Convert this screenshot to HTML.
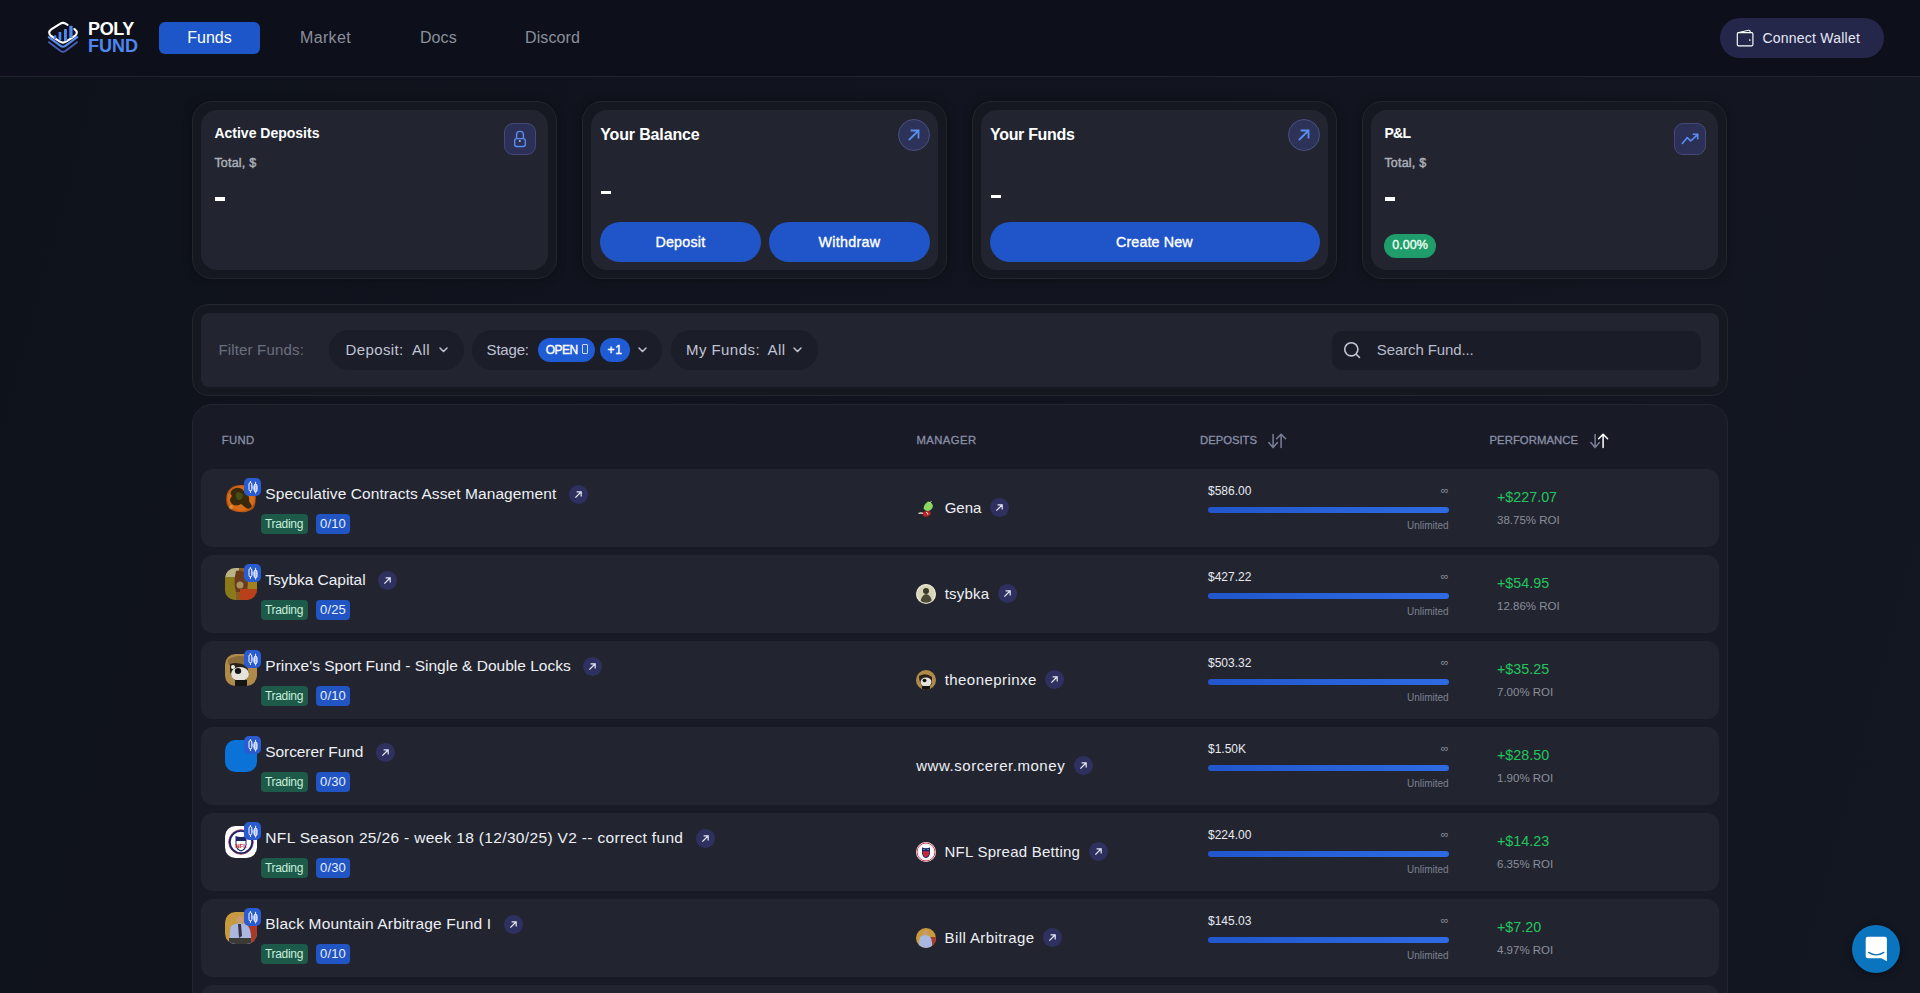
<!DOCTYPE html>
<html><head><meta charset="utf-8"><style>

*{box-sizing:border-box;margin:0;padding:0}
html,body{width:1920px;height:993px;overflow:hidden}
body{background:linear-gradient(105deg,#0e121b 0%,#11141e 35%,#12151f 65%,#131722 100%);font-family:"Liberation Sans",sans-serif;color:#fff;position:relative}
.t{position:absolute;line-height:1;white-space:pre}
.a{position:absolute}
svg{position:absolute;overflow:visible}
#hdr{position:absolute;left:0;top:0;width:1920px;height:77px;background:#0d101a;border-bottom:1px solid #22252f}
.navact{position:absolute;left:159px;top:22px;width:101px;height:32px;background:#1d56c9;border-radius:6px}
#cw{position:absolute;left:1720px;top:18px;width:164px;height:40px;border-radius:20px;background:#24264a}
.card{position:absolute;top:101px;width:365px;height:178px;border-radius:20px;background:#161821;border:1px solid #23262f;box-shadow:0 0 10px rgba(0,0,0,0.35)}
.card .in{position:absolute;left:8px;top:8px;right:8px;bottom:8px;border-radius:16px;background:#22252f}
.ibox{position:absolute;width:32px;height:32px;border-radius:9px;background:#2c3057;border:1px solid #444879}
.icirc{position:absolute;width:32px;height:32px;border-radius:50%;background:#2d3258;border:1px solid #4a4f80}
.btn{position:absolute;top:222px;height:40px;border-radius:20px;background:#1f55c8}
.dash{position:absolute;height:3px;background:#fff}
#filt{position:absolute;left:192px;top:304px;width:1536px;height:92px;border-radius:16px;background:#161821;border:1px solid #23262f}
#filt .in{position:absolute;left:8px;top:8px;right:8px;bottom:8px;border-radius:8px;background:#22252f}
.pill{position:absolute;top:330px;height:40px;border-radius:20px;background:#1b1d29}
.chip{position:absolute;top:338px;height:24px;border-radius:12px;background:#1f5bd2}
#search{position:absolute;left:1332px;top:331px;width:369px;height:39px;border-radius:10px;background:#1a1c27}
#tbl{position:absolute;left:192px;top:404px;width:1536px;height:700px;border-radius:20px;background:#181a25;border:1px solid #23262f}
.row{position:absolute;left:201px;width:1518px;height:78px;border-radius:12px;background:#22252f}
.av{position:absolute;width:32px;height:32px;border-radius:50%;overflow:hidden}
.bdg{position:absolute;width:17px;height:18px;border-radius:5px;background:#2a5bd0}
.trd{position:absolute;width:47px;height:20px;border-radius:4px;background:#1e5a4a}
.cnt{position:absolute;width:34px;height:20px;border-radius:4px;background:#2155c4}
.mav{position:absolute;width:20px;height:20px;border-radius:50%;overflow:hidden}
.rc{position:absolute;width:19px;height:19px;border-radius:50%;background:#2e3160}
.bar{position:absolute;left:1208px;width:241px;height:5px;border-radius:3px;background:linear-gradient(90deg,#2156cc,#2e6be3)}
#chat{position:absolute;left:1852px;top:925px;width:48px;height:48px;border-radius:50%;background:#0a74bf;box-shadow:0 1px 6px rgba(0,0,0,0.5)}

</style></head><body>
<div id="hdr"></div>
<svg style="left:0;top:0" width="150" height="76" viewBox="0 0 150 76">
<path d="M49 42.2 L60.6 51 Q63 52.7 65.4 51 L77 42.2" fill="none" stroke="#5670d8" stroke-width="2" stroke-linecap="round" opacity="0.8"/>
<path d="M48.8 37.2 L60.6 45.9 Q63 47.6 65.4 45.9 L77.2 37.2" fill="none" stroke="#5b8cf0" stroke-width="2.1" stroke-linecap="round"/>
<path d="M67.6 24.8 L66 23.8 Q63 21.9 60 23.8 L51.2 29.4 Q47.2 32.7 51.2 36 L60 41.7 Q63 43.6 66 41.7 L74.8 36 Q78.8 32.7 74.8 29.4 L74.3 29" fill="none" stroke="#fff" stroke-width="2.1" stroke-linecap="round" stroke-linejoin="round"/>
<rect x="53.8" y="35.3" width="2.5" height="3.6" rx="1" fill="#4f86f0"/>
<rect x="58.6" y="31.9" width="2.7" height="8.4" rx="0.6" fill="#4f86f0"/>
<rect x="64" y="29" width="2.9" height="12" rx="0.6" fill="#4f86f0"/>
<rect x="69.3" y="25.8" width="3.3" height="12" rx="0.6" fill="#4f86f0"/>
</svg>
<div class="t" style="left:88.00px;top:19.70px;font-size:18px;color:#fff;font-weight:bold;letter-spacing:-0.340px;">POLY</div>
<div class="t" style="left:88.00px;top:37.10px;font-size:18px;color:#4f86f0;font-weight:bold;">FUND</div>
<div class="navact"></div>
<div class="t" style="left:187.30px;top:29.70px;font-size:16px;color:#fff;letter-spacing:-0.014px;">Funds</div>
<div class="t" style="left:300.00px;top:29.70px;font-size:16px;color:#8b8f9c;letter-spacing:0.349px;">Market</div>
<div class="t" style="left:420.00px;top:29.70px;font-size:16px;color:#8b8f9c;letter-spacing:0.062px;">Docs</div>
<div class="t" style="left:525.00px;top:29.70px;font-size:16px;color:#8b8f9c;letter-spacing:0.109px;">Discord</div>
<div id="cw"></div>
<svg style="left:1736px;top:29px" width="19" height="19" viewBox="0 0 19 19">
<rect x="1.3" y="3.6" width="15.6" height="13.2" rx="1.3" fill="none" stroke="#fff" stroke-width="1.15"/>
<path d="M1.6 3.8 L12.6 1.3 Q13.9 1.1 14.1 2.3 L14.3 3.6" fill="none" stroke="#fff" stroke-width="1.15"/>
<circle cx="13.8" cy="11" r="0.85" fill="#fff"/>
</svg>
<div class="t" style="left:1762.50px;top:31.10px;font-size:14px;color:#e6e8f5;letter-spacing:0.220px;">Connect Wallet</div>
<div class="card" style="left:192px"><div class="in"></div></div>
<div class="card" style="left:582px"><div class="in"></div></div>
<div class="card" style="left:972px"><div class="in"></div></div>
<div class="card" style="left:1362px"><div class="in"></div></div>
<div class="t" style="left:214.40px;top:126.40px;font-size:14px;color:#fff;font-weight:bold;">Active Deposits</div>
<div class="t" style="left:214.40px;top:156.88px;font-size:12.5px;color:#acb0bb;letter-spacing:0.211px;-webkit-text-stroke:0.45px currentColor;">Total, $</div>
<div class="dash" style="left:215px;top:197px;width:10px;height:4px"></div>
<div class="ibox" style="left:504px;top:123px"></div>
<svg style="left:504px;top:123px" width="32" height="32" viewBox="0 0 32 32">
<rect x="10.7" y="15.6" width="10.6" height="7.9" rx="2" fill="none" stroke="#5b8def" stroke-width="1.4"/>
<path d="M12.6 15.6 V11.8 Q12.6 8.4 16 8.4 Q19.4 8.4 19.4 11.8 V15.6" fill="none" stroke="#5b8def" stroke-width="1.4"/>
<circle cx="15.8" cy="18" r="1" fill="#9fc0ff"/>
</svg>
<div class="t" style="left:600.20px;top:127.40px;font-size:16px;color:#fff;font-weight:bold;letter-spacing:-0.140px;">Your Balance</div>
<div class="icirc" style="left:898px;top:119px"></div>
<svg style="left:898px;top:119px" width="32" height="32" viewBox="0 0 32 32"><path d="M11.5 20.5 L20.5 11.5 M13.5 11.5 H20.5 V18.5" fill="none" stroke="#5b8def" stroke-width="1.8" stroke-linecap="square"/></svg>
<div class="dash" style="left:601px;top:191px;width:10px"></div>
<div class="btn" style="left:600px;width:161px"></div>
<div class="btn" style="left:769px;width:161px"></div>
<div class="t" style="left:655.40px;top:235.15px;font-size:14.3px;color:#fff;letter-spacing:0.217px;-webkit-text-stroke:0.35px currentColor;">Deposit</div>
<div class="t" style="left:818.50px;top:235.15px;font-size:14.3px;color:#fff;letter-spacing:0.301px;-webkit-text-stroke:0.35px currentColor;">Withdraw</div>
<div class="t" style="left:990.00px;top:127.40px;font-size:16px;color:#fff;font-weight:bold;letter-spacing:-0.310px;">Your Funds</div>
<div class="icirc" style="left:1288px;top:119px"></div>
<svg style="left:1288px;top:119px" width="32" height="32" viewBox="0 0 32 32"><path d="M11.5 20.5 L20.5 11.5 M13.5 11.5 H20.5 V18.5" fill="none" stroke="#5b8def" stroke-width="1.8" stroke-linecap="square"/></svg>
<div class="dash" style="left:991px;top:195px;width:10px"></div>
<div class="btn" style="left:990px;width:330px"></div>
<div class="t" style="left:1116.00px;top:235.15px;font-size:14.3px;color:#fff;letter-spacing:0.120px;-webkit-text-stroke:0.35px currentColor;">Create New</div>
<div class="t" style="left:1384.40px;top:126.40px;font-size:14px;color:#fff;font-weight:bold;letter-spacing:-0.667px;">P&amp;L</div>
<div class="t" style="left:1384.40px;top:156.88px;font-size:12.5px;color:#acb0bb;letter-spacing:0.211px;-webkit-text-stroke:0.45px currentColor;">Total, $</div>
<div class="dash" style="left:1385px;top:197px;width:10px;height:4px"></div>
<div class="ibox" style="left:1674px;top:123px"></div>
<svg style="left:1674px;top:123px" width="32" height="32" viewBox="0 0 32 32">
<path d="M8.3 20.4 L13.3 14.6 L16.7 18 L23.7 11.3 M19.3 11.3 H23.7 V15.8" fill="none" stroke="#5b8def" stroke-width="1.6" stroke-linecap="round" stroke-linejoin="round"/>
</svg>
<div class="a" style="left:1384px;top:234px;width:52px;height:24px;border-radius:12px;background:#1f9d6a"></div>
<div class="t" style="left:1392.30px;top:239.38px;font-size:12.5px;color:#f0fff6;letter-spacing:0.049px;-webkit-text-stroke:0.35px currentColor;">0.00%</div>
<div id="filt"><div class="in"></div></div>
<div class="t" style="left:218.40px;top:342.05px;font-size:15px;color:#6b7080;letter-spacing:0.172px;">Filter Funds:</div>
<div class="pill" style="left:329px;width:135px"></div>
<div class="t" style="left:345.60px;top:342.05px;font-size:15px;color:#c0c4d4;letter-spacing:0.371px;">Deposit:</div>
<div class="t" style="left:412.00px;top:342.05px;font-size:15px;color:#c0c4d4;letter-spacing:0.443px;">All</div>
<svg style="left:438.5px;top:347px" width="10" height="7" viewBox="0 0 10 7"><path d="M1 1 L4.5 4.5 L8 1" fill="none" stroke="#c0c4d4" stroke-width="1.5" stroke-linecap="round" stroke-linejoin="round"/></svg>
<div class="pill" style="left:471.5px;width:190px"></div>
<div class="t" style="left:486.60px;top:342.05px;font-size:15px;color:#c0c4d4;letter-spacing:-0.196px;">Stage:</div>
<div class="chip" style="left:538px;width:57px"></div>
<div class="chip" style="left:600px;width:30px"></div>
<div class="t" style="left:545.70px;top:344.00px;font-size:12px;color:#fff;letter-spacing:-0.504px;-webkit-text-stroke:0.35px currentColor;">OPEN</div>
<div class="a" style="left:582px;top:344px;width:6px;height:10px;border:1px solid #cfd8ff;border-radius:1px"></div>
<div class="t" style="left:607.50px;top:344.00px;font-size:12px;color:#fff;letter-spacing:0.656px;-webkit-text-stroke:0.35px currentColor;">+1</div>
<svg style="left:637.5px;top:347px" width="10" height="7" viewBox="0 0 10 7"><path d="M1 1 L4.5 4.5 L8 1" fill="none" stroke="#c0c4d4" stroke-width="1.5" stroke-linecap="round" stroke-linejoin="round"/></svg>
<div class="pill" style="left:670.5px;width:147px"></div>
<div class="t" style="left:686.00px;top:342.05px;font-size:15px;color:#c0c4d4;letter-spacing:0.441px;">My Funds:</div>
<div class="t" style="left:767.50px;top:342.05px;font-size:15px;color:#c0c4d4;letter-spacing:0.443px;">All</div>
<svg style="left:793px;top:347px" width="10" height="7" viewBox="0 0 10 7"><path d="M1 1 L4.5 4.5 L8 1" fill="none" stroke="#c0c4d4" stroke-width="1.5" stroke-linecap="round" stroke-linejoin="round"/></svg>
<div id="search"></div>
<svg style="left:1342px;top:340px" width="20" height="20" viewBox="0 0 20 20">
<circle cx="9.3" cy="9.3" r="6.6" fill="none" stroke="#c0c4d4" stroke-width="1.6"/>
<path d="M14.2 14.2 L17.5 17.5" stroke="#c0c4d4" stroke-width="1.6" stroke-linecap="round"/>
</svg>
<div class="t" style="left:1376.80px;top:342.25px;font-size:15px;color:#b8bccb;letter-spacing:-0.114px;">Search Fund...</div>
<div id="tbl"></div>
<div class="t" style="left:221.70px;top:435.39px;font-size:11.3px;color:#8a8fa8;letter-spacing:0.402px;-webkit-text-stroke:0.3px currentColor;">FUND</div>
<div class="t" style="left:916.50px;top:435.39px;font-size:11.3px;color:#8a8fa8;letter-spacing:0.411px;-webkit-text-stroke:0.3px currentColor;">MANAGER</div>
<div class="t" style="left:1200.00px;top:435.39px;font-size:11.3px;color:#8a8fa8;letter-spacing:-0.016px;-webkit-text-stroke:0.3px currentColor;">DEPOSITS</div>
<div class="t" style="left:1489.50px;top:435.39px;font-size:11.3px;color:#8a8fa8;letter-spacing:0.057px;-webkit-text-stroke:0.3px currentColor;">PERFORMANCE</div>
<svg style="left:1268px;top:433px" width="19" height="16" viewBox="0 0 19 16"><path d="M5.1 1.5 V14.6 M0.8 9.6 L5.1 14.6 L9.4 9.6" fill="none" stroke="#7a7f98" stroke-width="1.5" stroke-linecap="round" stroke-linejoin="round"/>
<path d="M13.1 14.6 V1.2 M8.6 5.8 L13.1 1.2 L17.6 5.8" fill="none" stroke="#7a7f98" stroke-width="1.5" stroke-linecap="round" stroke-linejoin="round"/></svg>
<svg style="left:1590px;top:433px" width="19" height="16" viewBox="0 0 19 16"><path d="M5.1 1.5 V14.6 M0.8 9.6 L5.1 14.6 L9.4 9.6" fill="none" stroke="#7a7f98" stroke-width="1.5" stroke-linecap="round" stroke-linejoin="round"/>
<path d="M13.1 14.6 V1.2 M8.6 5.8 L13.1 1.2 L17.6 5.8" fill="none" stroke="#ffffff" stroke-width="1.5" stroke-linecap="round" stroke-linejoin="round"/></svg>
<div class="row" style="top:469px"></div>
<svg style="left:225px;top:482px" width="32" height="32" viewBox="0 0 32 32"><clipPath id="ca0"><rect width="32" height="32" rx="10.5"/></clipPath><g clip-path="url(#ca0)"><defs><radialGradient id="gsp0" cx="50%" cy="50%" r="62%"><stop offset="0" stop-color="#e07820"/><stop offset="0.7" stop-color="#d86a18"/><stop offset="1" stop-color="#6a2a08"/></radialGradient></defs>
<path d="M3 9 Q8 2 17 3 Q27 2 30 9 Q32 18 29 26 Q24 31 15 30 Q5 30 2 23 Q0 15 3 9Z" fill="url(#gsp0)"/>
<path d="M7 8 Q12 4 17 7 L21 11 Q25 14 24 19 L27 24 Q25 28 21 26 L16 22 Q11 25 7 22 Q3 18 7 14 Q4 11 7 8Z" fill="#3a2a0c"/>
<path d="M11 11 Q15 9 18 13 Q18 18 13 18 Q10 15 11 11Z" fill="#4a5218" opacity="0.9"/>
<circle cx="26" cy="8" r="2" fill="#f0a040" opacity="0.8"/><circle cx="6" cy="25" r="2" fill="#f0a040" opacity="0.7"/></g></svg>
<div class="bdg" style="left:244px;top:478px"></div>
<svg style="left:244px;top:478px" width="17" height="18" viewBox="0 0 17 18"><path d="M8 8 L11 12" stroke="#9fb8ff" stroke-width="2.2" opacity="0.7"/><path d="M6.4 3 V15 M11.6 3.8 V15.5" stroke="#fff" stroke-width="0.9"/><rect x="5" y="4.6" width="2.8" height="8.2" rx="1.4" fill="#2a5bd0" stroke="#fff" stroke-width="1"/><rect x="10.2" y="6.2" width="2.8" height="7.5" rx="1.4" fill="#9fb8ff" stroke="#fff" stroke-width="1"/></svg>
<div class="t" style="left:265.30px;top:485.82px;font-size:15.5px;color:#eef0f6;letter-spacing:0.085px;">Speculative Contracts Asset Management</div>
<div class="rc" style="left:568.8px;top:485px"></div>
<svg style="left:568.8px;top:485px" width="19" height="19" viewBox="0 0 19 19"><path d="M6.8 12.2 L12 7 M8.2 6.8 H12.2 V10.8" fill="none" stroke="#e6e8f5" stroke-width="1.2" stroke-linecap="square"/></svg>
<div class="trd" style="left:261px;top:514px"></div>
<div class="t" style="left:265.00px;top:518.30px;font-size:12px;color:#c8efd9;letter-spacing:-0.321px;">Trading</div>
<div class="cnt" style="left:316px;top:514px"></div>
<div class="t" style="left:320.00px;top:517.45px;font-size:13px;color:#e8eeff;letter-spacing:0.172px;">0/10</div>
<svg style="left:916.3px;top:498px" width="20" height="20" viewBox="0 0 20 20"><clipPath id="cm0"><circle cx="10" cy="10" r="10"/></clipPath><g clip-path="url(#cm0)"><path d="M7.5 10.5 Q8 6 12 3.5 Q16 4 17 8 Q16.5 12 12 13 Q9 13 7.5 10.5Z" fill="#8ad860"/>
<path d="M13 5 L15.5 3.5" stroke="#c8f0a0" stroke-width="1"/>
<path d="M6 15 Q9 12.5 13 13 Q15.5 14 14.5 16.5 Q11.5 19.5 8 18.5Z" fill="#b82424"/>
<path d="M2.5 15.5 Q5 14.5 7 15.5" stroke="#e8e0d0" stroke-width="1.3" fill="none"/>
<path d="M10.5 14 L12 16.5" stroke="#f0e0d0" stroke-width="1.1"/></g></svg>
<div class="t" style="left:944.70px;top:500.25px;font-size:15px;color:#eef0f6;letter-spacing:-0.026px;">Gena</div>
<div class="rc" style="left:989.8px;top:498px"></div>
<svg style="left:989.8px;top:498px" width="19" height="19" viewBox="0 0 19 19"><path d="M6.8 12.2 L12 7 M8.2 6.8 H12.2 V10.8" fill="none" stroke="#e6e8f5" stroke-width="1.2" stroke-linecap="square"/></svg>
<div class="t" style="left:1208.00px;top:484.80px;font-size:12px;color:#e8eaf2;">$586.00</div>
<div class="t" style="left:1440.66px;top:484.65px;font-size:11px;color:#8a8f9c;">∞</div>
<div class="bar" style="top:507.3px;height:5.7px"></div>
<div class="t" style="left:1407.00px;top:521.00px;font-size:10px;color:#7d8190;letter-spacing:-0.021px;">Unlimited</div>
<div class="t" style="left:1497.00px;top:490.14px;font-size:14.3px;color:#22c55e;">+$227.07</div>
<div class="t" style="left:1497.00px;top:515.02px;font-size:11.5px;color:#8a8f9c;">38.75% ROI</div>
<div class="row" style="top:555px"></div>
<svg style="left:225px;top:568px" width="32" height="32" viewBox="0 0 32 32"><clipPath id="ca1"><rect width="32" height="32" rx="10.5"/></clipPath><g clip-path="url(#ca1)"><rect width="32" height="32" fill="#8a5a22"/>
<rect x="0" y="0" width="14" height="10" fill="#b8b488"/>
<rect x="0" y="9" width="11" height="23" fill="#8a7a1a"/>
<path d="M11 3 Q19 1 22 9 Q24 17 20 24 L11 24 Q8 15 11 3Z" fill="#6a3a1a"/>
<circle cx="15" cy="17" r="3.5" fill="#a89060"/>
<rect x="15" y="21" width="17" height="11" fill="#b8401a"/>
<rect x="23" y="12" width="9" height="9" fill="#a08020"/></g></svg>
<div class="bdg" style="left:244px;top:564px"></div>
<svg style="left:244px;top:564px" width="17" height="18" viewBox="0 0 17 18"><path d="M8 8 L11 12" stroke="#9fb8ff" stroke-width="2.2" opacity="0.7"/><path d="M6.4 3 V15 M11.6 3.8 V15.5" stroke="#fff" stroke-width="0.9"/><rect x="5" y="4.6" width="2.8" height="8.2" rx="1.4" fill="#2a5bd0" stroke="#fff" stroke-width="1"/><rect x="10.2" y="6.2" width="2.8" height="7.5" rx="1.4" fill="#9fb8ff" stroke="#fff" stroke-width="1"/></svg>
<div class="t" style="left:265.30px;top:571.83px;font-size:15.5px;color:#eef0f6;letter-spacing:-0.035px;">Tsybka Capital</div>
<div class="rc" style="left:378.1px;top:571px"></div>
<svg style="left:378.1px;top:571px" width="19" height="19" viewBox="0 0 19 19"><path d="M6.8 12.2 L12 7 M8.2 6.8 H12.2 V10.8" fill="none" stroke="#e6e8f5" stroke-width="1.2" stroke-linecap="square"/></svg>
<div class="trd" style="left:261px;top:600px"></div>
<div class="t" style="left:265.00px;top:604.30px;font-size:12px;color:#c8efd9;letter-spacing:-0.321px;">Trading</div>
<div class="cnt" style="left:316px;top:600px"></div>
<div class="t" style="left:320.00px;top:603.45px;font-size:13px;color:#e8eeff;letter-spacing:0.172px;">0/25</div>
<svg style="left:916.3px;top:584px" width="20" height="20" viewBox="0 0 20 20"><clipPath id="cm1"><circle cx="10" cy="10" r="10"/></clipPath><g clip-path="url(#cm1)"><rect width="20" height="20" fill="#d8d4b8"/>
<path d="M4 20 Q5 11 10 10 Q16 11 16 20Z" fill="#4a4a34"/>
<circle cx="10" cy="7" r="3" fill="#3a3a28"/>
<circle cx="10" cy="10" r="9.3" fill="none" stroke="#e8e6d8" stroke-width="1.2"/></g></svg>
<div class="t" style="left:944.70px;top:586.25px;font-size:15px;color:#eef0f6;letter-spacing:0.223px;">tsybka</div>
<div class="rc" style="left:997.9px;top:584px"></div>
<svg style="left:997.9px;top:584px" width="19" height="19" viewBox="0 0 19 19"><path d="M6.8 12.2 L12 7 M8.2 6.8 H12.2 V10.8" fill="none" stroke="#e6e8f5" stroke-width="1.2" stroke-linecap="square"/></svg>
<div class="t" style="left:1208.00px;top:570.80px;font-size:12px;color:#e8eaf2;">$427.22</div>
<div class="t" style="left:1440.66px;top:570.65px;font-size:11px;color:#8a8f9c;">∞</div>
<div class="bar" style="top:593.3px;height:5.7px"></div>
<div class="t" style="left:1407.00px;top:607.00px;font-size:10px;color:#7d8190;letter-spacing:-0.021px;">Unlimited</div>
<div class="t" style="left:1497.00px;top:576.14px;font-size:14.3px;color:#22c55e;">+$54.95</div>
<div class="t" style="left:1497.00px;top:601.02px;font-size:11.5px;color:#8a8f9c;">12.86% ROI</div>
<div class="row" style="top:641px"></div>
<svg style="left:225px;top:654px" width="32" height="32" viewBox="0 0 32 32"><clipPath id="ca2"><rect width="32" height="32" rx="10.5"/></clipPath><g clip-path="url(#ca2)"><rect width="32" height="32" fill="#b08a48"/>
<path d="M3 6 Q10 0 22 3 L26 10 L8 12 Q2 12 3 6Z" fill="#8a6a38"/>
<path d="M5 10 Q12 7 22 12 L24 20 Q22 28 14 28 Q7 26 5 18Z" fill="#2a2218"/>
<ellipse cx="15" cy="20" rx="9" ry="7" fill="#e6e4da"/>
<ellipse cx="13" cy="17" rx="3.2" ry="3" fill="#151515"/>
<circle cx="8" cy="13" r="2" fill="#f0f0ea"/>
<rect x="10" y="26" width="12" height="6" fill="#151515"/></g></svg>
<div class="bdg" style="left:244px;top:650px"></div>
<svg style="left:244px;top:650px" width="17" height="18" viewBox="0 0 17 18"><path d="M8 8 L11 12" stroke="#9fb8ff" stroke-width="2.2" opacity="0.7"/><path d="M6.4 3 V15 M11.6 3.8 V15.5" stroke="#fff" stroke-width="0.9"/><rect x="5" y="4.6" width="2.8" height="8.2" rx="1.4" fill="#2a5bd0" stroke="#fff" stroke-width="1"/><rect x="10.2" y="6.2" width="2.8" height="7.5" rx="1.4" fill="#9fb8ff" stroke="#fff" stroke-width="1"/></svg>
<div class="t" style="left:265.30px;top:657.83px;font-size:15.5px;color:#eef0f6;">Prinxe&#x27;s Sport Fund - Single &amp; Double Locks</div>
<div class="rc" style="left:582.8px;top:657px"></div>
<svg style="left:582.8px;top:657px" width="19" height="19" viewBox="0 0 19 19"><path d="M6.8 12.2 L12 7 M8.2 6.8 H12.2 V10.8" fill="none" stroke="#e6e8f5" stroke-width="1.2" stroke-linecap="square"/></svg>
<div class="trd" style="left:261px;top:686px"></div>
<div class="t" style="left:265.00px;top:690.30px;font-size:12px;color:#c8efd9;letter-spacing:-0.321px;">Trading</div>
<div class="cnt" style="left:316px;top:686px"></div>
<div class="t" style="left:320.00px;top:689.45px;font-size:13px;color:#e8eeff;letter-spacing:0.172px;">0/10</div>
<svg style="left:916.3px;top:670px" width="20" height="20" viewBox="0 0 20 20"><clipPath id="cm2"><circle cx="10" cy="10" r="10"/></clipPath><g clip-path="url(#cm2)"><rect width="20" height="20" fill="#b08a48"/>
<path d="M3 6 Q10 2 16 7 L16 14 Q12 18 7 17 Q3 13 3 6Z" fill="#2a2218"/>
<ellipse cx="10" cy="12" rx="5.5" ry="4.5" fill="#e6e4da"/>
<ellipse cx="8.5" cy="10.5" rx="2" ry="1.8" fill="#151515"/>
<rect x="6" y="16" width="8" height="4" fill="#151515"/></g></svg>
<div class="t" style="left:944.70px;top:672.25px;font-size:15px;color:#eef0f6;letter-spacing:0.439px;">theoneprinxe</div>
<div class="rc" style="left:1045.2px;top:670px"></div>
<svg style="left:1045.2px;top:670px" width="19" height="19" viewBox="0 0 19 19"><path d="M6.8 12.2 L12 7 M8.2 6.8 H12.2 V10.8" fill="none" stroke="#e6e8f5" stroke-width="1.2" stroke-linecap="square"/></svg>
<div class="t" style="left:1208.00px;top:656.80px;font-size:12px;color:#e8eaf2;">$503.32</div>
<div class="t" style="left:1440.66px;top:656.65px;font-size:11px;color:#8a8f9c;">∞</div>
<div class="bar" style="top:679.3px;height:5.7px"></div>
<div class="t" style="left:1407.00px;top:693.00px;font-size:10px;color:#7d8190;letter-spacing:-0.021px;">Unlimited</div>
<div class="t" style="left:1497.00px;top:662.14px;font-size:14.3px;color:#22c55e;">+$35.25</div>
<div class="t" style="left:1497.00px;top:687.02px;font-size:11.5px;color:#8a8f9c;">7.00% ROI</div>
<div class="row" style="top:727px"></div>
<svg style="left:225px;top:740px" width="32" height="32" viewBox="0 0 32 32"><clipPath id="ca3"><rect width="32" height="32" rx="10.5"/></clipPath><g clip-path="url(#ca3)"><rect width="32" height="32" fill="#0b72d8"/></g></svg>
<div class="bdg" style="left:244px;top:736px"></div>
<svg style="left:244px;top:736px" width="17" height="18" viewBox="0 0 17 18"><path d="M8 8 L11 12" stroke="#9fb8ff" stroke-width="2.2" opacity="0.7"/><path d="M6.4 3 V15 M11.6 3.8 V15.5" stroke="#fff" stroke-width="0.9"/><rect x="5" y="4.6" width="2.8" height="8.2" rx="1.4" fill="#2a5bd0" stroke="#fff" stroke-width="1"/><rect x="10.2" y="6.2" width="2.8" height="7.5" rx="1.4" fill="#9fb8ff" stroke="#fff" stroke-width="1"/></svg>
<div class="t" style="left:265.30px;top:743.83px;font-size:15.5px;color:#eef0f6;letter-spacing:-0.083px;">Sorcerer Fund</div>
<div class="rc" style="left:375.8px;top:743px"></div>
<svg style="left:375.8px;top:743px" width="19" height="19" viewBox="0 0 19 19"><path d="M6.8 12.2 L12 7 M8.2 6.8 H12.2 V10.8" fill="none" stroke="#e6e8f5" stroke-width="1.2" stroke-linecap="square"/></svg>
<div class="trd" style="left:261px;top:772px"></div>
<div class="t" style="left:265.00px;top:776.30px;font-size:12px;color:#c8efd9;letter-spacing:-0.321px;">Trading</div>
<div class="cnt" style="left:316px;top:772px"></div>
<div class="t" style="left:320.00px;top:775.45px;font-size:13px;color:#e8eeff;letter-spacing:0.172px;">0/30</div>
<div class="t" style="left:916.20px;top:758.25px;font-size:15px;color:#eef0f6;letter-spacing:0.543px;">www.sorcerer.money</div>
<div class="rc" style="left:1073.7px;top:756px"></div>
<svg style="left:1073.7px;top:756px" width="19" height="19" viewBox="0 0 19 19"><path d="M6.8 12.2 L12 7 M8.2 6.8 H12.2 V10.8" fill="none" stroke="#e6e8f5" stroke-width="1.2" stroke-linecap="square"/></svg>
<div class="t" style="left:1208.00px;top:742.80px;font-size:12px;color:#e8eaf2;">$1.50K</div>
<div class="t" style="left:1440.66px;top:742.65px;font-size:11px;color:#8a8f9c;">∞</div>
<div class="bar" style="top:765.3px;height:5.7px"></div>
<div class="t" style="left:1407.00px;top:779.00px;font-size:10px;color:#7d8190;letter-spacing:-0.021px;">Unlimited</div>
<div class="t" style="left:1497.00px;top:748.14px;font-size:14.3px;color:#22c55e;">+$28.50</div>
<div class="t" style="left:1497.00px;top:773.02px;font-size:11.5px;color:#8a8f9c;">1.90% ROI</div>
<div class="row" style="top:813px"></div>
<svg style="left:225px;top:826px" width="32" height="32" viewBox="0 0 32 32"><clipPath id="ca4"><rect width="32" height="32" rx="10.5"/></clipPath><g clip-path="url(#ca4)"><rect width="32" height="32" fill="#ffffff"/>
<circle cx="16" cy="16" r="12.3" fill="none" stroke="#c8283a" stroke-width="0.9"/>
<circle cx="16" cy="16" r="11.2" fill="none" stroke="#1a2668" stroke-width="1.8"/>
<path d="M10.5 10 Q16 12 21.5 10 L21.5 19 Q21 24 16 25.5 Q11 24 10.5 19Z" fill="#1a2668"/>
<path d="M11.5 15 H20.5 V19 Q20 23 16 24.3 Q12 23 11.5 19Z" fill="#fff"/>
<text x="16" y="21.7" font-family="Liberation Sans" font-weight="bold" font-size="6" fill="#c8283a" text-anchor="middle">NFL</text></g></svg>
<div class="bdg" style="left:244px;top:822px"></div>
<svg style="left:244px;top:822px" width="17" height="18" viewBox="0 0 17 18"><path d="M8 8 L11 12" stroke="#9fb8ff" stroke-width="2.2" opacity="0.7"/><path d="M6.4 3 V15 M11.6 3.8 V15.5" stroke="#fff" stroke-width="0.9"/><rect x="5" y="4.6" width="2.8" height="8.2" rx="1.4" fill="#2a5bd0" stroke="#fff" stroke-width="1"/><rect x="10.2" y="6.2" width="2.8" height="7.5" rx="1.4" fill="#9fb8ff" stroke="#fff" stroke-width="1"/></svg>
<div class="t" style="left:265.30px;top:829.83px;font-size:15.5px;color:#eef0f6;letter-spacing:0.336px;">NFL Season 25/26 - week 18 (12/30/25) V2 -- correct fund</div>
<div class="rc" style="left:695.8px;top:829px"></div>
<svg style="left:695.8px;top:829px" width="19" height="19" viewBox="0 0 19 19"><path d="M6.8 12.2 L12 7 M8.2 6.8 H12.2 V10.8" fill="none" stroke="#e6e8f5" stroke-width="1.2" stroke-linecap="square"/></svg>
<div class="trd" style="left:261px;top:858px"></div>
<div class="t" style="left:265.00px;top:862.30px;font-size:12px;color:#c8efd9;letter-spacing:-0.321px;">Trading</div>
<div class="cnt" style="left:316px;top:858px"></div>
<div class="t" style="left:320.00px;top:861.45px;font-size:13px;color:#e8eeff;letter-spacing:0.172px;">0/30</div>
<svg style="left:916.3px;top:842px" width="20" height="20" viewBox="0 0 20 20"><clipPath id="cm4"><circle cx="10" cy="10" r="10"/></clipPath><g clip-path="url(#cm4)"><rect width="20" height="20" fill="#ffffff"/>
<circle cx="10" cy="10" r="9" fill="none" stroke="#c8283a" stroke-width="0.9"/>
<circle cx="10" cy="10" r="7.6" fill="none" stroke="#e8e8f0" stroke-width="1"/>
<path d="M6 5.5 Q10 6.8 14 5.5 L14 11.5 Q13.5 15 10 16.2 Q6.5 15 6 11.5Z" fill="#1a2668"/>
<path d="M6.8 9.3 H13.2 V11.6 Q12.8 14.5 10 15.4 Q7.2 14.5 6.8 11.6Z" fill="#c8283a"/>
<circle cx="8" cy="7.5" r="0.5" fill="#fff"/><circle cx="12" cy="7.5" r="0.5" fill="#fff"/></g></svg>
<div class="t" style="left:944.50px;top:844.25px;font-size:15px;color:#eef0f6;letter-spacing:0.251px;">NFL Spread Betting</div>
<div class="rc" style="left:1088.7px;top:842px"></div>
<svg style="left:1088.7px;top:842px" width="19" height="19" viewBox="0 0 19 19"><path d="M6.8 12.2 L12 7 M8.2 6.8 H12.2 V10.8" fill="none" stroke="#e6e8f5" stroke-width="1.2" stroke-linecap="square"/></svg>
<div class="t" style="left:1208.00px;top:828.80px;font-size:12px;color:#e8eaf2;">$224.00</div>
<div class="t" style="left:1440.66px;top:828.65px;font-size:11px;color:#8a8f9c;">∞</div>
<div class="bar" style="top:851.3px;height:5.7px"></div>
<div class="t" style="left:1407.00px;top:865.00px;font-size:10px;color:#7d8190;letter-spacing:-0.021px;">Unlimited</div>
<div class="t" style="left:1497.00px;top:834.14px;font-size:14.3px;color:#22c55e;">+$14.23</div>
<div class="t" style="left:1497.00px;top:859.02px;font-size:11.5px;color:#8a8f9c;">6.35% ROI</div>
<div class="row" style="top:899px"></div>
<svg style="left:225px;top:912px" width="32" height="32" viewBox="0 0 32 32"><clipPath id="ca5"><rect width="32" height="32" rx="10.5"/></clipPath><g clip-path="url(#ca5)"><rect width="32" height="32" fill="#c89a40"/>
<rect x="22" y="14" width="10" height="18" fill="#a83a2a"/>
<path d="M6 14 Q12 10 20 12 Q27 14 26 32 L5 32 Q4 22 6 14Z" fill="#a8b8e0"/>
<path d="M13 12 L16 12 L17 24 L14 26Z" fill="#3a3040"/>
<circle cx="15" cy="7.5" r="3.5" fill="#c89a78"/>
<rect x="4" y="26" width="22" height="6" fill="#3a3a38"/></g></svg>
<div class="bdg" style="left:244px;top:908px"></div>
<svg style="left:244px;top:908px" width="17" height="18" viewBox="0 0 17 18"><path d="M8 8 L11 12" stroke="#9fb8ff" stroke-width="2.2" opacity="0.7"/><path d="M6.4 3 V15 M11.6 3.8 V15.5" stroke="#fff" stroke-width="0.9"/><rect x="5" y="4.6" width="2.8" height="8.2" rx="1.4" fill="#2a5bd0" stroke="#fff" stroke-width="1"/><rect x="10.2" y="6.2" width="2.8" height="7.5" rx="1.4" fill="#9fb8ff" stroke="#fff" stroke-width="1"/></svg>
<div class="t" style="left:265.30px;top:915.83px;font-size:15.5px;color:#eef0f6;letter-spacing:0.175px;">Black Mountain Arbitrage Fund I</div>
<div class="rc" style="left:503.8px;top:915px"></div>
<svg style="left:503.8px;top:915px" width="19" height="19" viewBox="0 0 19 19"><path d="M6.8 12.2 L12 7 M8.2 6.8 H12.2 V10.8" fill="none" stroke="#e6e8f5" stroke-width="1.2" stroke-linecap="square"/></svg>
<div class="trd" style="left:261px;top:944px"></div>
<div class="t" style="left:265.00px;top:948.30px;font-size:12px;color:#c8efd9;letter-spacing:-0.321px;">Trading</div>
<div class="cnt" style="left:316px;top:944px"></div>
<div class="t" style="left:320.00px;top:947.45px;font-size:13px;color:#e8eeff;letter-spacing:0.172px;">0/10</div>
<svg style="left:916.3px;top:928px" width="20" height="20" viewBox="0 0 20 20"><clipPath id="cm5"><circle cx="10" cy="10" r="10"/></clipPath><g clip-path="url(#cm5)"><rect width="20" height="20" fill="#c89a40"/>
<rect x="14" y="9" width="6" height="11" fill="#a83a2a"/>
<path d="M4 9 Q8 6 12 7.5 Q17 9 16 20 L3 20 Q2.5 14 4 9Z" fill="#a8b8e0"/>
<circle cx="9.5" cy="4.7" r="2.3" fill="#c89a78"/></g></svg>
<div class="t" style="left:944.50px;top:930.25px;font-size:15px;color:#eef0f6;letter-spacing:0.413px;">Bill Arbitrage</div>
<div class="rc" style="left:1043.0px;top:928px"></div>
<svg style="left:1043.0px;top:928px" width="19" height="19" viewBox="0 0 19 19"><path d="M6.8 12.2 L12 7 M8.2 6.8 H12.2 V10.8" fill="none" stroke="#e6e8f5" stroke-width="1.2" stroke-linecap="square"/></svg>
<div class="t" style="left:1208.00px;top:914.80px;font-size:12px;color:#e8eaf2;">$145.03</div>
<div class="t" style="left:1440.66px;top:914.65px;font-size:11px;color:#8a8f9c;">∞</div>
<div class="bar" style="top:937.3px;height:5.7px"></div>
<div class="t" style="left:1407.00px;top:951.00px;font-size:10px;color:#7d8190;letter-spacing:-0.021px;">Unlimited</div>
<div class="t" style="left:1497.00px;top:920.14px;font-size:14.3px;color:#22c55e;">+$7.20</div>
<div class="t" style="left:1497.00px;top:945.02px;font-size:11.5px;color:#8a8f9c;">4.97% ROI</div>
<div class="row" style="top:985px"></div>
<div id="chat"></div><svg style="left:1852px;top:925px" width="48" height="48" viewBox="0 0 48 48">
<path d="M13.7 14 Q13.7 11.8 15.9 11.8 H32.7 Q34.9 11.8 34.9 14 V36.2 L29.3 33.3 H15.9 Q13.7 33.3 13.7 31.1 Z" fill="#fff"/>
<path d="M16.6 27.4 Q24.2 32.2 31.8 27.4" fill="none" stroke="#0b6fb5" stroke-width="1.3" stroke-linecap="round"/>
</svg>
</body></html>
